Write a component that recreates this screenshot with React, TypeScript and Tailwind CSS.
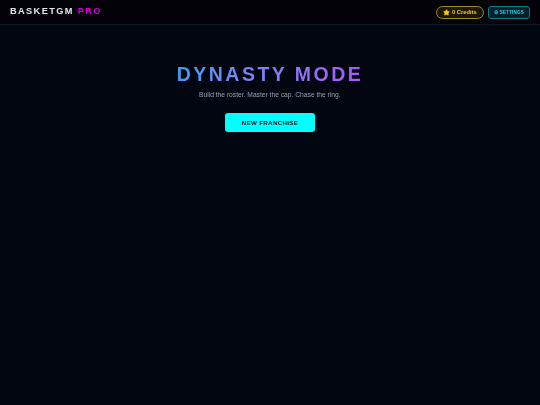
import { Star } from "lucide-react";

export default function App() {
  return (
    <div className="flex min-h-[405px] flex-col bg-[#020611] font-['Liberation_Sans',Arial,sans-serif]">
      <header className="flex h-[25px] items-center justify-between border-b border-[#0b1a24] bg-[#020208] px-[10px]">
        <div className="text-[9.2px] font-bold tracking-[1.4px] text-[#e2e8f0] will-change-transform">
          BASKETGM <span className="text-[#d000d0]">PRO</span>
        </div>
        <div className="flex items-center gap-1">
          <div className="flex h-[13px] items-center gap-[2px] rounded-full border border-[#a08a20] bg-[#1a1608] px-[6px] text-[5.8px] font-bold text-[#facc15] will-change-transform">
            <Star className="size-[7px] fill-[#facc15] text-[#facc15]" />
            0 Credits
          </div>
          <button className="flex h-[13px] items-center gap-[2px] rounded-[3px] border border-[#0e7c86] bg-[#04202a] px-[5px] pt-[1px] text-[4.5px] font-bold tracking-[0.05em] text-[#22d3ee] will-change-transform">
            ⚙ SETTINGS
          </button>
        </div>
      </header>
      <main className="flex flex-col items-center pt-[37px]">
        <h1 className="bg-gradient-to-r from-[#3f9cf0] to-[#a855f7] bg-clip-text text-[19.5px] font-bold leading-[24px] tracking-[2.5px] text-transparent">
          DYNASTY MODE
        </h1>
        <p className="mt-[4px] text-[6.7px] leading-[10px] text-[#94a3b8] will-change-transform">
          Build the roster. Master the cap. Chase the ring.
        </p>
        <button className="mt-[13px] flex h-[19px] w-[90px] items-center justify-center rounded-[3px] bg-[#00ffff] text-[6.2px] font-bold tracking-[0.05em] text-[#04101a] will-change-transform">
          NEW FRANCHISE
        </button>
      </main>
    </div>
  );
}
